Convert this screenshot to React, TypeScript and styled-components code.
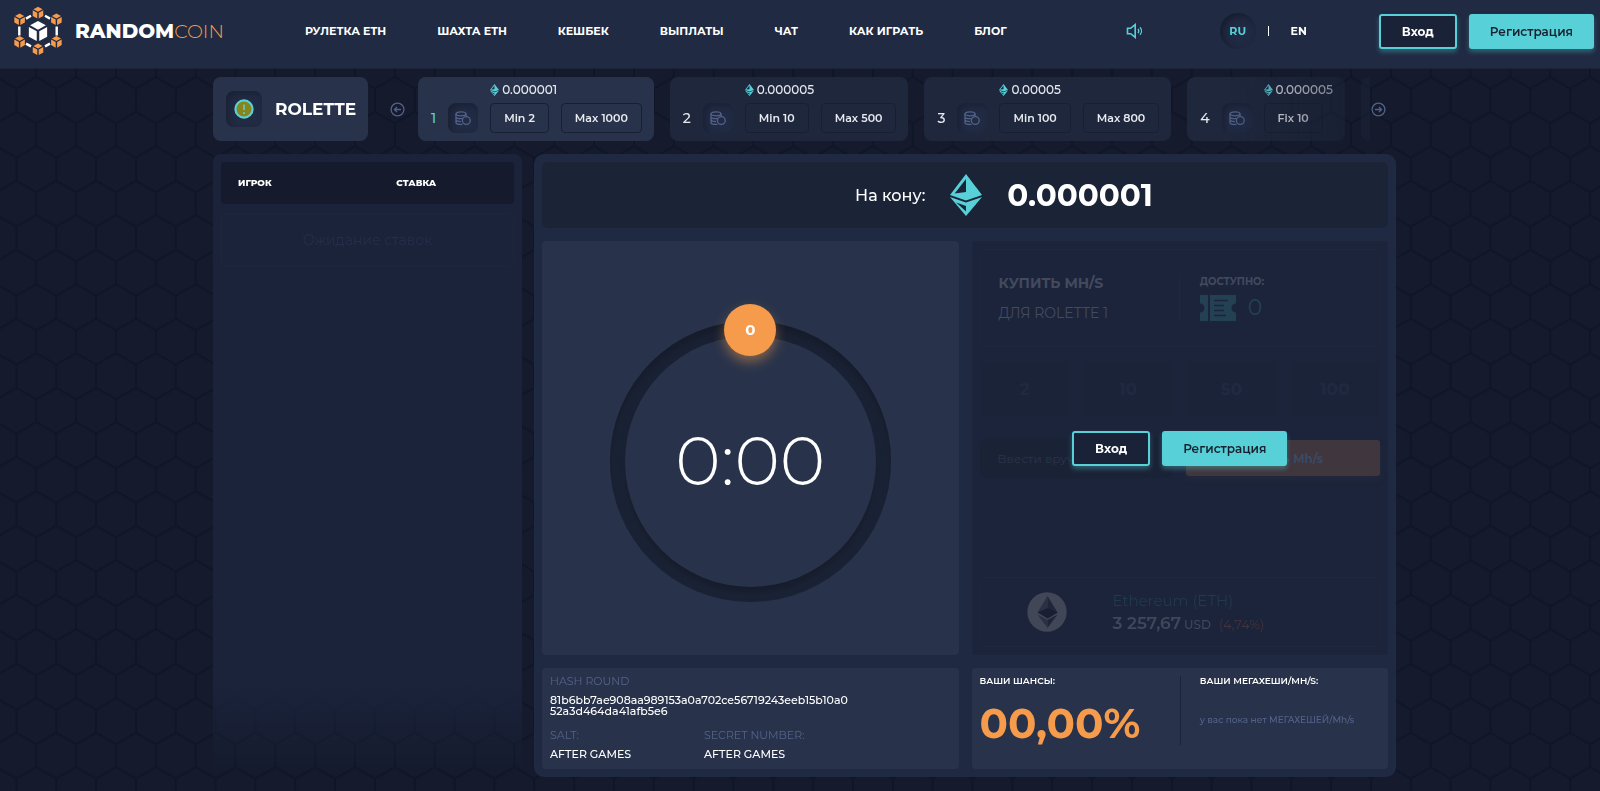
import React from "react";
import styled, { createGlobalStyle, css } from "styled-components";

const c = {
  page: "#151b2d",
  line: "#0f1627",
  header: "#202a42",
  panel: "#1f2a42",
  card: "#28334b",
  cardDim: "#1e273c",
  side: "#1b233b",
  dark: "#151b2c",
  bar: "#1b2337",
  teal: "#57d0d7",
  orange: "#f59b4b",
  muted: "#53628a",
};

const GlobalStyle = createGlobalStyle`
  *, *::before, *::after { box-sizing: border-box; }
  body {
    margin: 0;
    background: ${c.page};
    color: #fff;
    font-family: Montserrat, Inter, "Noto Sans", sans-serif;
    font-size: 12px;
  }
  h1, h2, p, dl, dd, dt, ul { margin: 0; padding: 0; font: inherit; }
  button, input { font: inherit; }
  button { cursor: pointer; }
`;

const Backdrop = styled.svg`
  position: fixed;
  inset: 0;
  width: 100%;
  height: 100%;
  z-index: -1;
`;

/* ---------- header ---------- */

const Header = styled.header`
  display: flex;
  align-items: center;
  height: 69px;
  padding: 0 6px 6px 14px;
  background: ${c.header};
  border-bottom: 1px solid #1c2439;
`;

const Logo = styled.a`
  display: flex;
  align-items: center;
  gap: 13px;
  width: 291px;
  color: #fff;
  text-decoration: none;
  font-size: 20px;
  font-weight: 800;
  span { color: ${c.orange}; font-size: 19px; font-weight: 300; }
`;

const Nav = styled.nav`
  display: flex;
  gap: 51px;
  margin-right: auto;
`;

const NavLink = styled.a`
  color: #fff;
  text-decoration: none;
  font-size: 11px;
  font-weight: 700;
  white-space: nowrap;
`;

const IconButton = styled.button`
  display: flex;
  padding: 0;
  border: 0;
  background: none;
  color: ${c.muted};
`;

const SoundButton = styled(IconButton)`
  color: ${c.teal};
  margin-right: 77px;
`;

const Languages = styled.div`
  display: flex;
  align-items: center;
  gap: 12px;
  margin-right: 62px;
`;

const Divider = styled.span`
  width: 1px;
  height: 10px;
  background: #fff;
`;

const Language = styled.a<{ $active?: boolean }>`
  display: flex;
  align-items: center;
  justify-content: center;
  width: 36px;
  height: 36px;
  border-radius: 50%;
  font-size: 11px;
  font-weight: 700;
  text-decoration: none;
  color: ${(p) => (p.$active ? c.teal : "#fff")};
  ${(p) => p.$active && css`box-shadow: inset 3px 3px 7px #151c2e;`}
`;

const AuthButtons = styled.div`
  display: flex;
  gap: 12px;
`;

const AuthButton = styled.button<{ $filled?: boolean }>`
  height: 35px;
  padding: 0 19px;
  min-width: 78px;
  border: 2px solid ${c.teal};
  border-radius: 3px;
  background: ${(p) => (p.$filled ? c.teal : "#1a2238")};
  color: ${(p) => (p.$filled ? "#17202f" : "#fff")};
  font-size: 12px;
  font-weight: ${(p) => (p.$filled ? 600 : 700)};
  box-shadow: 0 3px 5px rgba(87, 208, 215, 0.35);
`;

/* ---------- room picker ---------- */

const Main = styled.main`
  display: grid;
  grid-template-columns: minmax(0, 1fr);
  gap: 13px;
  padding: 8px 204px 14px 213px;
`;

const Rooms = styled.section`
  display: flex;
  align-items: center;
  height: 64px;
`;

const GameTitle = styled.h1`
  display: flex;
  align-items: center;
  gap: 13px;
  flex: none;
  width: 155px;
  height: 64px;
  padding-left: 13px;
  border-radius: 8px;
  background: ${c.card};
  font-size: 17px;
  font-weight: 700;
`;

const Well = styled.span<{ $size: number }>`
  display: flex;
  align-items: center;
  justify-content: center;
  width: ${(p) => p.$size}px;
  height: ${(p) => p.$size}px;
  border-radius: 8px;
  color: ${c.muted};
  background: #212b43;
  box-shadow: inset 3px 3px 6px #192135;
`;

const Prev = styled(IconButton)`
  margin: 0 13px 0 22px;
`;

const Next = styled(IconButton)`
  margin: 0 10px 0 1px;
`;

const Slider = styled.div`
  display: flex;
  gap: 16px;
  flex: 1;
  min-width: 0;
  overflow: hidden;
  mask-image: linear-gradient(90deg, #000 85%, rgba(0, 0, 0, 0.35));
`;

const Room = styled.article<{ $active?: boolean }>`
  display: flex;
  align-items: flex-end;
  flex: none;
  gap: 12px;
  height: 64px;
  padding: 6px 12px 8px 13px;
  border-radius: 8px;
  background: ${(p) => (p.$active ? c.card : c.cardDim)};
  color: ${(p) => (p.$active ? c.teal : "#e8eaf0")};
`;

const RoomNumber = styled.span`
  font-size: 14px;
  font-weight: 500;
  line-height: 30px;
`;

const RoomBody = styled.div`
  display: grid;
  gap: 6px;
  color: #e8eaf0;
`;

const Price = styled.div`
  display: flex;
  align-items: center;
  gap: 3px;
  line-height: 14px;
  font-weight: 500;
`;

const Limits = styled.div`
  display: flex;
  gap: 12px;
`;

const Limit = styled.span`
  padding: 0 13px;
  border: 1px solid #172033;
  border-radius: 4px;
  font-size: 11px;
  line-height: 28px;
  font-weight: 600;
  white-space: nowrap;
`;

/* ---------- game area ---------- */

const Board = styled.div`
  display: grid;
  grid-template-columns: 309fr 862fr;
  gap: 12px;
`;

const Players = styled.aside`
  padding: 8px;
  border-radius: 8px;
  background: linear-gradient(${c.side} 85%, rgba(27, 35, 59, 0));
`;

const PlayerTable = styled.table`
  width: 100%;
  border-spacing: 0;
  table-layout: fixed;
  th {
    height: 42px;
    padding: 0 17px 2px;
    background: ${c.dark};
    text-align: left;
    font-size: 9px;
    font-weight: 800;
  }
  th:first-child { border-radius: 4px 0 0 4px; width: 54%; }
  th:last-child { border-radius: 0 4px 4px 0; }
`;

const Waiting = styled.p`
  margin-top: 9px;
  border: 1px solid #1d263c;
  border-radius: 6px;
  color: #252e48;
  text-align: center;
  font-size: 14px;
  line-height: 52px;
`;

const Game = styled.section`
  display: grid;
  grid-template-columns: 1fr 1fr;
  gap: 13px;
  padding: 8px;
  border-radius: 10px;
  background: ${c.panel};
`;

const StakeBar = styled.div`
  grid-column: 1 / -1;
  display: flex;
  align-items: center;
  justify-content: center;
  gap: 25px;
  height: 66px;
  padding-left: 78px;
  border-radius: 6px;
  background: ${c.bar};
  font-size: 16px;
  font-weight: 500;
  strong { font-size: 31px; font-weight: 700; }
`;

const Tile = styled.div`
  border-radius: 4px;
  background: ${c.card};
`;

const TimerTile = styled(Tile)`
  display: flex;
  align-items: center;
  justify-content: center;
  height: 414px;
  padding-top: 26px;
`;

const Ring = styled.div`
  position: relative;
  display: flex;
  align-items: center;
  justify-content: center;
  width: 281px;
  height: 281px;
  border-radius: 50%;
  background: #1b2437;
  box-shadow: inset 0 8px 10px #161c2b;
`;

const Dial = styled.div`
  display: flex;
  align-items: center;
  justify-content: center;
  width: 251px;
  height: 251px;
  padding-bottom: 2px;
  border-radius: 50%;
  background: ${c.card};
  box-shadow: 0 6px 9px #161c2b;
  font-size: 69px;
  font-weight: 300;
`;

const Ball = styled.div`
  position: absolute;
  top: -17px;
  left: 50%;
  margin-left: -26px;
  width: 52px;
  height: 52px;
  border-radius: 50%;
  background: ${c.orange};
  box-shadow: 0 6px 12px rgba(245, 155, 75, 0.45);
  text-align: center;
  line-height: 52px;
  font-size: 15px;
  font-weight: 700;
`;

const BuyTile = styled(Tile)`
  position: relative;
  background: #1c243b;
`;

const BuyContent = styled.div`
  display: flex;
  flex-direction: column;
  height: 100%;
  padding: 8px;
`;

const Outline = styled.div`
  border: 1px solid #1e273c;
  border-radius: 6px;
`;

const BuyHead = styled(Outline)`
  display: grid;
  grid-template-columns: 1fr 1fr;
  align-items: center;
  height: 98px;
  color: #434a5e;
  font-size: 14px;
`;

const BuyTitle = styled.div`
  display: grid;
  gap: 12px;
  padding-left: 18px;
  line-height: 18px;
  border-right: 1px solid #1f283e;
  strong { font-weight: 700; }
`;

const Available = styled.div`
  display: grid;
  gap: 6px;
  padding-left: 20px;
  font-size: 10px;
  font-weight: 700;
  line-height: 14px;
`;

const Tickets = styled.div`
  display: flex;
  align-items: center;
  gap: 12px;
  color: #234153;
  font-size: 22px;
  font-weight: 400;
`;

const Presets = styled.div`
  display: grid;
  grid-template-columns: repeat(4, 1fr);
  gap: 13px;
  margin: 14px 0 21px;
`;

const Preset = styled.button`
  height: 56px;
  border: 1px solid #1d253b;
  border-radius: 6px;
  background: #1b2339;
  color: #20293f;
  font-size: 17px;
  font-weight: 700;
`;

const BuyRow = styled.div`
  display: grid;
  grid-template-columns: 1fr 1fr;
  align-items: center;
  gap: 13px;
`;

const Amount = styled.input`
  width: 100%;
  height: 40px;
  padding: 0 18px;
  border: 0;
  border-radius: 6px;
  background: #1a2236;
  color: #2b344b;
  &::placeholder { color: #2b344b; opacity: 1; }
`;

const BuyButton = styled.button`
  height: 36px;
  border: 0;
  border-radius: 3px;
  background: #40363d;
  color: #3a4a66;
  font-weight: 700;
  box-shadow: 0 4px 6px rgba(64, 54, 61, 0.2);
`;

const Rate = styled(Outline)`
  display: flex;
  align-items: center;
  gap: 46px;
  height: 70px;
  margin-top: auto;
  padding-left: 46px;
`;

const RateText = styled.div`
  color: #20394c;
  font-size: 15px;
  line-height: 23px;
  p { display: flex; align-items: baseline; color: #40475b; font-weight: 500; font-size: 12px; }
  strong { margin-right: 3px; font-size: 17px; font-weight: 600; }
  em { margin-left: 8px; color: #45323a; font-style: normal; font-weight: 400; font-size: 13px; }
`;

const LoginOverlay = styled.div`
  position: absolute;
  inset: 0;
  display: flex;
  align-items: center;
  justify-content: center;
`;

const FootTile = styled(Tile)`
  height: 101px;
  padding: 8px;
`;

const RoundInfo = styled.dl`
  display: grid;
  grid-template-columns: 154px 1fr;
  line-height: 11px;
  font-size: 11px;
  font-weight: 500;
  dt { margin-bottom: 8px; color: ${c.muted}; font-weight: 400; }
`;

const HashField = styled.div`
  grid-column: 1 / -1;
  margin-bottom: 13px;
`;

const ChanceTile = styled(FootTile)`
  display: grid;
  grid-template-columns: 1fr 1fr;
`;

const Stat = styled.div`
  height: 69px;
  font-size: 9px;
  font-weight: 600;
  line-height: 10px;
  & + & { padding-left: 19px; border-left: 1px solid #1c2439; }
`;

const Chance = styled.div`
  margin-top: 11px;
  color: ${c.orange};
  font-size: 42px;
  font-weight: 700;
  line-height: 52px;
`;

const Empty = styled.p`
  margin-top: 27px;
  color: ${c.muted};
  line-height: 14px;
  font-weight: 500;
  white-space: nowrap;
`;

/* ---------- drawings ---------- */

const Cube = ({ x, y, r, fill }: { x: number; y: number; r: number; fill: string }) => (
  <g transform={`translate(${x} ${y}) scale(${r})`} fill={fill}>
    <path d="M0-1 .76-.58 0-.16-.76-.58Z" />
    <path d="M-.88-.42-.12 0V.94L-.88.52Z" />
    <path d="M.88-.42.12 0V.94L.88.52Z" />
  </g>
);

const LogoMark = () => (
  <svg width="48" height="50" viewBox="0 0 48 50" aria-hidden="true">
    <g stroke="#fff" strokeWidth="2.4">
      <path d="M5.3 20.5v9M42.7 20.5v9M12 12.6l5-2.8M36 12.6l-5-2.8M12 37.6l5 2.8M36 37.6l-5 2.8" />
    </g>
    <Cube x={24} y={25.3} r={10.4} fill="#fff" />
    <Cube x={24} y={6.8} r={6} fill={c.orange} />
    <Cube x={24} y={43.4} r={6} fill={c.orange} />
    <Cube x={5.6} y={13.4} r={6} fill={c.orange} />
    <Cube x={42.4} y={13.4} r={6} fill={c.orange} />
    <Cube x={5.6} y={36} r={6} fill={c.orange} />
    <Cube x={42.4} y={36} r={6} fill={c.orange} />
  </svg>
);

const EthMark = ({ width, height }: { width: number; height: number }) => (
  <svg width={width} height={height} viewBox="0 0 31 42" preserveAspectRatio="none" aria-hidden="true">
    <path fill={c.teal} fillRule="evenodd" d="M15.5 0 31 21 15.5 26.5 0 21ZM15.5 5 4.5 19.5 15.5 18Z" />
    <path fill={c.teal} fillRule="evenodd" d="M0 23 15.5 28.5 31 23 15.5 42ZM6 28.500 15.500 37.500V32Z" />
  </svg>
);

const CoinStack = () => (
  <svg width="16" height="15" viewBox="0 0 16 15" fill="none" stroke="currentColor" strokeWidth="1.3" aria-hidden="true">
    <ellipse cx="6" cy="2.8" rx="5" ry="2" />
    <path d="M1 2.8v8.6c0 1.2 2.2 2 5 2h1.5M11 2.8v2.5M1 5.7c0 1.2 2.2 2 5 2h1.5M1 8.6c0 1.2 2.2 2 5 2" />
    <circle cx="11.3" cy="9.5" r="3.9" />
  </svg>
);

const TokenMark = () => (
  <svg width="20" height="20" viewBox="0 0 20 20" aria-hidden="true">
    <circle cx="10" cy="10" r="8.6" fill="#87851c" stroke={c.teal} strokeWidth="2.2" />
    <path d="M10 5.5v5.5M10 13v2" stroke={c.teal} strokeWidth="1.6" />
  </svg>
);

const ArrowMark = ({ left }: { left?: boolean }) => (
  <svg width="15" height="15" viewBox="0 0 15 15" fill="none" stroke="currentColor" strokeWidth="1.3" aria-hidden="true">
    <circle cx="7.5" cy="7.5" r="6.4" />
    <path d={left ? "M11 7.5H4.5M7 5 4.5 7.5 7 10" : "M4 7.5h6.5M8 5l2.5 2.5L8 10"} />
  </svg>
);

const SpeakerMark = () => (
  <svg width="17" height="16" viewBox="0 0 17 16" fill="none" stroke="currentColor" strokeWidth="1.6" aria-hidden="true">
    <path d="M1.5 5.3h3.2L9.2 1.6v12.8L4.7 10.7H1.5Z" />
    <path d="M12 5.8c1 1.3 1 3.1 0 4.400M14 4.200c2 2.200 2 5.400 0 7.600" strokeWidth="1.3" />
  </svg>
);

const TicketMark = () => (
  <svg width="36" height="26" viewBox="0 0 36 26" aria-hidden="true">
    <path fill="currentColor" d="M0 0H8V26H0V17.5A4.5 4.5 0 0 0 0 8.5ZM10 0H36V8.5A4.5 4.5 0 0 0 36 17.5V26H10Z" />
    <path stroke="#1c243b" strokeWidth="1.6" d="M14 5.5H28M14 10.5H24M14 15.5H24M14 20.5H26" />
  </svg>
);

const EthCoin = () => (
  <svg width="40" height="40" viewBox="0 0 40 40" aria-hidden="true">
    <circle cx="20" cy="20" r="19.7" fill="#424757" />
    <path fill="#2b3142" d="M20.5 4 10.5 20.5 20.5 17ZM10.5 22.5 20.5 28V36Z" />
    <path fill="#1f263a" d="M20.5 4 30.5 20.5 20.5 26.5ZM30.5 22.5 20.5 28V36Z" />
    <path fill="#181f33" d="M10.5 20.5 20.5 16 30.5 20.5 20.5 26.5Z" />
  </svg>
);

const Hexagons = () => (
  <Backdrop aria-hidden="true">
    <defs>
      <pattern id="hex" x="16.4" y="8.2" width="39.84" height="69" patternUnits="userSpaceOnUse">
        <path
          fill="none"
          stroke={c.line}
          strokeWidth="2"
          d="M19.92 0 0 11.5V34.5L19.92 46 39.84 34.5V11.5ZM19.92 46V69M0 80.5 19.92 69 39.84 80.5M0-11.5 19.92 0 39.84-11.5"
        />
      </pattern>
    </defs>
    <rect width="100%" height="100%" fill="url(#hex)" />
  </Backdrop>
);

/* ---------- data ---------- */

const nav = ["РУЛЕТКА ETH", "ШАХТА ETH", "КЕШБЕК", "ВЫПЛАТЫ", "ЧАТ", "КАК ИГРАТЬ", "БЛОГ"];

const rooms = [
  { id: 1, price: "0.000001", limits: ["Min 2", "Max 1000"] },
  { id: 2, price: "0.000005", limits: ["Min 10", "Max 500"] },
  { id: 3, price: "0.00005", limits: ["Min 100", "Max 800"] },
  { id: 4, price: "0.000005", limits: ["Fix 10"] },
];

const Auth = () => (
  <AuthButtons>
    <AuthButton type="button">Вход</AuthButton>
    <AuthButton type="button" $filled>Регистрация</AuthButton>
  </AuthButtons>
);

export default function App() {
  return (
    <>
      <GlobalStyle />
      <Hexagons />
      <Header>
        <Logo href="#">
          <LogoMark />
          <div>RANDOM<span>COIN</span></div>
        </Logo>
        <Nav>
          {nav.map((item) => (
            <NavLink href="#" key={item}>{item}</NavLink>
          ))}
        </Nav>
        <SoundButton type="button" aria-label="Звук"><SpeakerMark /></SoundButton>
        <Languages>
          <Language href="#" $active>RU</Language>
          <Divider />
          <Language href="#">EN</Language>
        </Languages>
        <Auth />
      </Header>

      <Main>
        <Rooms>
          <GameTitle>
            <Well $size={36}><TokenMark /></Well>
            ROLETTE
          </GameTitle>
          <Prev type="button" aria-label="Назад"><ArrowMark left /></Prev>
          <Slider>
            {rooms.map((room) => (
              <Room key={room.id} $active={room.id === 1}>
                <RoomNumber>{room.id}</RoomNumber>
                <Well $size={30}><CoinStack /></Well>
                <RoomBody>
                  <Price><EthMark width={9} height={12} />{room.price}</Price>
                  <Limits>
                    {room.limits.map((limit) => (
                      <Limit key={limit}>{limit}</Limit>
                    ))}
                  </Limits>
                </RoomBody>
              </Room>
            ))}
            <Room />
          </Slider>
          <Next type="button" aria-label="Вперёд"><ArrowMark /></Next>
        </Rooms>

        <Board>
          <Players>
            <PlayerTable>
              <thead>
                <tr><th>ИГРОК</th><th>СТАВКА</th></tr>
              </thead>
            </PlayerTable>
            <Waiting>Ожидание ставок</Waiting>
          </Players>

          <Game>
            <StakeBar>
              <span>На кону:</span>
              <EthMark width={32} height={42} />
              <strong>0.000001</strong>
            </StakeBar>

            <TimerTile>
              <Ring>
                <Dial>0:00</Dial>
                <Ball>0</Ball>
              </Ring>
            </TimerTile>

            <BuyTile>
              <BuyContent>
                <BuyHead>
                  <BuyTitle>
                    <strong>КУПИТЬ MH/S</strong>
                    <span>ДЛЯ ROLETTE 1</span>
                  </BuyTitle>
                  <Available>
                    ДОСТУПНО:
                    <Tickets><TicketMark />0</Tickets>
                  </Available>
                </BuyHead>
                <Presets>
                  {[2, 10, 50, 100].map((n) => (
                    <Preset type="button" key={n}>{n}</Preset>
                  ))}
                </Presets>
                <BuyRow>
                  <Amount placeholder="Ввести вручную" aria-label="Ввести вручную" />
                  <BuyButton type="button">Купить Mh/s</BuyButton>
                </BuyRow>
                <Rate>
                  <EthCoin />
                  <RateText>
                    Ethereum (ETH)
                    <p><strong>3 257,67</strong>USD<em>(4,74%)</em></p>
                  </RateText>
                </Rate>
              </BuyContent>
              <LoginOverlay><Auth /></LoginOverlay>
            </BuyTile>

            <FootTile>
              <RoundInfo>
                <HashField>
                  <dt>HASH ROUND</dt>
                  <dd>81b6bb7ae908aa989153a0a702ce56719243eeb15b10a0<br />52a3d464da41afb5e6</dd>
                </HashField>
                <div>
                  <dt>SALT:</dt>
                  <dd>AFTER GAMES</dd>
                </div>
                <div>
                  <dt>SECRET NUMBER:</dt>
                  <dd>AFTER GAMES</dd>
                </div>
              </RoundInfo>
            </FootTile>

            <ChanceTile>
              <Stat>
                ВАШИ ШАНСЫ:
                <Chance>00,00%</Chance>
              </Stat>
              <Stat>
                ВАШИ МЕГАХЕШИ/MH/S:
                <Empty>у вас пока нет МЕГАХЕШЕЙ/Mh/s</Empty>
              </Stat>
            </ChanceTile>
          </Game>
        </Board>
      </Main>
    </>
  );
}
